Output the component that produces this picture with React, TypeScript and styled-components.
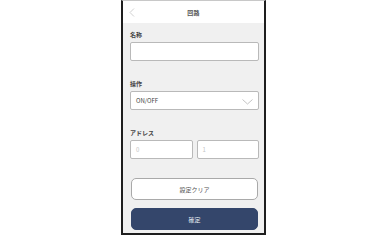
import React from "react";
import styled, { createGlobalStyle } from "styled-components";

const GlobalStyle = createGlobalStyle`
  html, body {
    margin: 0;
    padding: 0;
    background: #ffffff;
  }
  * {
    box-sizing: border-box;
  }
`;

const Frame = styled.div`
  width: 145px;
  height: 235px;
  margin: 0 auto;
  border: 2px solid #1e1e1e;
  border-top: 1px solid #c8c8c8;
  background: #f0f0f0;
  display: flex;
  flex-direction: column;
  font-family: "Noto Sans CJK JP", "Noto Sans", sans-serif;
  color: #333;
`;

const Header = styled.div`
  position: relative;
  height: 22px;
  background: #ffffff;
  display: flex;
  align-items: center;
  justify-content: center;
  flex-shrink: 0;
`;

const Title = styled.div`
  font-size: 6px;
  font-weight: 700;
  color: #555;
  letter-spacing: 0.3px;
`;

const Back = styled.svg`
  position: absolute;
  left: 6px;
  top: 7px;
  width: 6px;
  height: 9px;
`;

const Body = styled.div`
  padding: 8px 5px 0 7px;
  display: flex;
  flex-direction: column;
`;

const Field = styled.div`
  display: flex;
  flex-direction: column;
  margin-bottom: 19px;
`;

const Label = styled.div`
  font-size: 6px;
  font-weight: 700;
  color: #444;
  line-height: 8px;
  margin-bottom: 3px;
`;

const Box = styled.div<{ $muted?: boolean }>`
  position: relative;
  height: 19px;
  flex-shrink: 0;
  background: #ffffff;
  border: 1px solid #b9b9b9;
  border-radius: 2px;
  display: flex;
  align-items: center;
  padding-left: 5px;
  font-size: 6px;
  color: ${(p) => (p.$muted ? "#c4c4c4" : "#444")};
`;

const Row = styled.div`
  display: flex;
  gap: 4px;

  & > * {
    flex: 1;
  }
`;

const Chevron = styled.svg`
  position: absolute;
  right: 5px;
  top: 7px;
  width: 11px;
  height: 6px;
`;

const Button = styled.div<{ $primary?: boolean }>`
  height: 22px;
  margin: 0 1px 8px 1px;
  border-radius: 5px;
  display: flex;
  align-items: center;
  justify-content: center;
  font-size: 6px;
  background: ${(p) => (p.$primary ? "#34466b" : "#ffffff")};
  color: ${(p) => (p.$primary ? "#e8ebf2" : "#555")};
  border: 1px solid ${(p) => (p.$primary ? "#34466b" : "#a9a9a9")};
`;

const App = () => {
  return (
    <>
      <GlobalStyle />
      <Frame>
        <Header>
          <Back viewBox="0 0 6 9">
            <path d="M5 0.5 L1 4.5 L5 8.5" fill="none" stroke="#c4c4c4" strokeWidth="0.8" />
          </Back>
          <Title>回路</Title>
        </Header>
        <Body>
          <Field>
            <Label>名称</Label>
            <Box />
          </Field>
          <Field>
            <Label>操作</Label>
            <Box>
              ON/OFF
              <Chevron viewBox="0 0 11 6">
                <path d="M0.5 0.5 L5.5 5 L10.5 0.5" fill="none" stroke="#b5b5b5" strokeWidth="0.8" />
              </Chevron>
            </Box>
          </Field>
          <Field>
            <Label>アドレス</Label>
            <Row>
              <Box $muted>0</Box>
              <Box $muted>1</Box>
            </Row>
          </Field>
          <Button>設定クリア</Button>
          <Button $primary>確定</Button>
        </Body>
      </Frame>
    </>
  );
};

export default App;
